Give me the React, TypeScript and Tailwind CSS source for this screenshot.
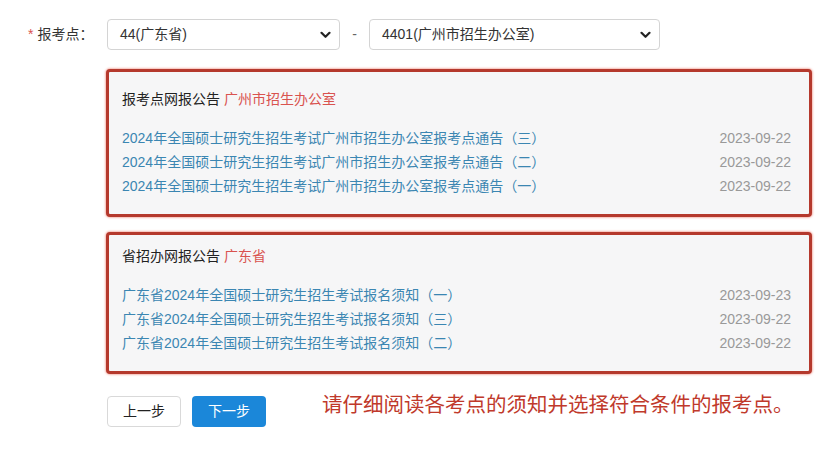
import React from "react";

const FONT = { fontFamily: '"Liberation Sans", Arial, "Noto Sans CJK SC", sans-serif' };

type Notice = { title: string; date: string };

const siteNotices: Notice[] = [
  { title: "2024年全国硕士研究生招生考试广州市招生办公室报考点通告（三）", date: "2023-09-22" },
  { title: "2024年全国硕士研究生招生考试广州市招生办公室报考点通告（二）", date: "2023-09-22" },
  { title: "2024年全国硕士研究生招生考试广州市招生办公室报考点通告（一）", date: "2023-09-22" },
];

const provinceNotices: Notice[] = [
  { title: "广东省2024年全国硕士研究生招生考试报名须知（一）", date: "2023-09-23" },
  { title: "广东省2024年全国硕士研究生招生考试报名须知（三）", date: "2023-09-22" },
  { title: "广东省2024年全国硕士研究生招生考试报名须知（二）", date: "2023-09-22" },
];

function Chevron() {
  return (
    <svg width="11" height="8" viewBox="0 0 11 8" className="shrink-0">
      <path d="M1.5 1.8 L5.5 5.8 L9.5 1.8" fill="none" stroke="#222" strokeWidth="2.2" strokeLinecap="round" strokeLinejoin="round" />
    </svg>
  );
}

function SelectBox({ value, width }: { value: string; width: string }) {
  return (
    <div
      className={`${width} h-[31px] flex items-center justify-between pl-[12px] pr-[8px] border border-[#d4d4d4] rounded-[4px] bg-white text-[14px] text-[#333]`}
    >
      <span>{value}</span>
      <Chevron />
    </div>
  );
}

function NoticePanel({
  label,
  region,
  items,
  padTop,
}: {
  label: string;
  region: string;
  items: Notice[];
  padTop: string;
}) {
  return (
    <div
      className={`w-[706px] border-[3px] border-[#b5392d] rounded-[4px] bg-[#f6f6f7] shadow-[0_0_2px_1px_#f6b9b1] ${padTop} pb-[16px] pl-[13px] pr-[18px] text-[14px] leading-[24px]`}
    >
      <div className="text-[#222]">
        {label} <span className="text-[#d9534f]">{region}</span>
      </div>
      <div className="mt-[15px] flex flex-col">
        {items.map((n, i) => (
          <div key={i} className="flex justify-between">
            <span className="text-[#3b86b2]">{n.title}</span>
            <span className="text-[#999]">{n.date}</span>
          </div>
        ))}
      </div>
    </div>
  );
}

export default function App() {
  return (
    <div className="w-[836px] h-[459px] bg-white pt-[19px]" style={FONT}>
      <div className="flex items-center">
        <div className="w-[107px] pl-[28px] text-[14px] text-[#333] flex items-center">
          <span className="text-[#d9534f] mr-[4px]">*</span>
          <span>报考点：</span>
        </div>
        <SelectBox value="44(广东省)" width="w-[233px]" />
        <span className="w-[29px] text-center text-[#666] text-[14px]">-</span>
        <SelectBox value="4401(广州市招生办公室)" width="w-[291px]" />
      </div>

      <div className="ml-[106px] mt-[19px]">
        <NoticePanel label="报考点网报公告" region="广州市招生办公室" items={siteNotices} padTop="pt-[15px]" />
        <div className="mt-[15px]">
          <NoticePanel label="省招办网报公告" region="广东省" items={provinceNotices} padTop="pt-[9px]" />
        </div>
      </div>

      <div className="ml-[107px] mt-[22px] flex items-start">
        <button className="w-[74px] h-[31px] border border-[#d9d9d9] rounded-[4px] bg-white text-[14px] text-[#222]">
          上一步
        </button>
        <button className="ml-[11px] w-[74px] h-[31px] rounded-[4px] bg-[#1b87d9] text-[14px] text-white">
          下一步
        </button>
        <span className="ml-[56px] -mt-[3px] text-[20.5px] leading-[24px] text-[#c0392b]">
          请仔细阅读各考点的须知并选择符合条件的报考点。
        </span>
      </div>
    </div>
  );
}
